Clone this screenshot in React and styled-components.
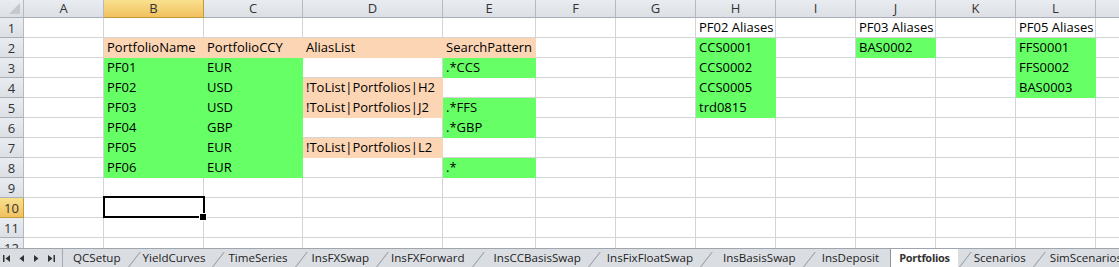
import React from "react";
import styled, { createGlobalStyle, css } from "styled-components";

const Global = createGlobalStyle`
  html, body { margin: 0; padding: 0; background: #fff; overflow: hidden; }
  * { box-sizing: border-box; }
`;

const GREEN = "#66FF66";
const PEACH = "#FCD5B4";
const GRID = "#D4D4D4";

const COLS = ["A", "B", "C", "D", "E", "F", "G", "H", "I", "J", "K", "L", "M"];
const WIDTHS = [24, 80, 100, 99, 140, 93, 80, 80, 80, 80, 80, 80, 80, 80];

const Sheet = styled.div`
  width: 1119px;
  height: 267px;
  display: flex;
  flex-direction: column;
  overflow: hidden;
  font-family: "Open Sans", "Liberation Sans", sans-serif;
`;

const Grid = styled.div`
  display: grid;
  grid-template-columns: ${WIDTHS.map((w) => w + "px").join(" ")};
  grid-template-rows: 18px repeat(12, 20px);
  height: 248px;
  width: 1119px;
  overflow: hidden;
  flex: none;
`;

const headerBase = css`
  background: linear-gradient(#E9ECF0, #DCE0E5);
  border-right: 1px solid #B5BAC1;
  border-bottom: 1px solid #A9AFB7;
  color: #333;
  font-size: 13px;
  display: flex;
  align-items: center;
  justify-content: center;
  ${(p) =>
    p.$active &&
    css`
      background: linear-gradient(#F9E08E, #F1C15F);
      border-right-color: #C59A3C;
      border-bottom-color: #C59A3C;
    `}
`;

const Corner = styled.div`
  ${headerBase};
  position: relative;
  &::after {
    content: "";
    position: absolute;
    right: 3px;
    bottom: 3px;
    width: 0;
    height: 0;
    border-left: 11px solid transparent;
    border-bottom: 11px solid #C4C9CF;
  }
`;

const ColHead = styled.div`
  ${headerBase};
  line-height: 17px;
`;

const RowHead = styled.div`
  ${headerBase};
  padding-top: 1px;
`;

const Cell = styled.div`
  position: relative;
  border-right: 1px solid ${(p) => p.$fill || GRID};
  border-bottom: 1px solid ${(p) => p.$fill || GRID};
  background: ${(p) => p.$fill || "#fff"};
  font-size: 13px;
  color: #000;
  display: flex;
  align-items: flex-end;
  padding: 0 3px 1px 3px;
  line-height: 18px;
  white-space: nowrap;
  overflow: visible;
  ${(p) =>
    p.$selected &&
    css`
      &::after {
        content: "";
        position: absolute;
        left: -1px;
        top: -2px;
        right: -2px;
        bottom: -1px;
        border: 2px solid #000;
        z-index: 2;
      }
      &::before {
        content: "";
        position: absolute;
        right: -4px;
        bottom: -4px;
        width: 6px;
        height: 6px;
        background: #000;
        border: 1px solid #fff;
        z-index: 3;
      }
    `}
`;

const TabBar = styled.div`
  height: 19px;
  background: #DADEE3;
  border-top: 1px solid #9EA5AD;
  display: flex;
  align-items: stretch;
  font-family: "Open Sans", "Liberation Sans", sans-serif;
  overflow: hidden;
  flex: none;
`;

const Nav = styled.div`
  width: 63px;
  display: flex;
  align-items: center;
  padding-left: 0px;
  border-right: 1px solid #A5ABB2;
  flex: none;
`;

const NavBtn = styled.span`
  width: 14.5px;
  display: flex;
  justify-content: center;
  align-items: center;
  svg { display: block; }
`;

const Tab = styled.div`
  position: relative;
  flex: none;
  display: flex;
  align-items: center;
  padding: 0 ${(p) => p.$pr}px 1px ${(p) => p.$pl}px;
  font-size: 11.6px;
  color: #222;
  white-space: nowrap;
  ${(p) =>
    p.$active &&
    css`
      background: #fff;
      font-weight: 700;
      font-size: 11px;
      letter-spacing: -0.3px;
      color: #333;
      margin-top: -1px;
      border-left: 1px solid #8E959D;
    `}
  ${(p) =>
    p.$slant &&
    css`
      &::before {
        content: "";
        position: absolute;
        left: 1px;
        top: 3px;
        bottom: 0;
        width: 1px;
        background: #8E959D;
        transform-origin: bottom left;
        transform: skewX(-38deg);
      }
    `}
`;

const rows = {
  1: { H: { t: "PF02 Aliases" }, J: { t: "PF03 Aliases" }, L: { t: "PF05 Aliases" } },
  2: {
    B: { t: "PortfolioName", f: PEACH },
    C: { t: "PortfolioCCY", f: PEACH },
    D: { t: "AliasList", f: PEACH },
    E: { t: "SearchPattern", f: PEACH },
    H: { t: "CCS0001", f: GREEN },
    J: { t: "BAS0002", f: GREEN },
    L: { t: "FFS0001", f: GREEN },
  },
  3: {
    B: { t: "PF01", f: GREEN },
    C: { t: "EUR", f: GREEN },
    E: { t: ".*CCS", f: GREEN },
    H: { t: "CCS0002", f: GREEN },
    L: { t: "FFS0002", f: GREEN },
  },
  4: {
    B: { t: "PF02", f: GREEN },
    C: { t: "USD", f: GREEN },
    D: { t: "!ToList|Portfolios|H2", f: PEACH },
    H: { t: "CCS0005", f: GREEN },
    L: { t: "BAS0003", f: GREEN },
  },
  5: {
    B: { t: "PF03", f: GREEN },
    C: { t: "USD", f: GREEN },
    D: { t: "!ToList|Portfolios|J2", f: PEACH },
    E: { t: ".*FFS", f: GREEN },
    H: { t: "trd0815", f: GREEN },
  },
  6: {
    B: { t: "PF04", f: GREEN },
    C: { t: "GBP", f: GREEN },
    E: { t: ".*GBP", f: GREEN },
  },
  7: {
    B: { t: "PF05", f: GREEN },
    C: { t: "EUR", f: GREEN },
    D: { t: "!ToList|Portfolios|L2", f: PEACH },
  },
  8: {
    B: { t: "PF06", f: GREEN },
    C: { t: "EUR", f: GREEN },
    E: { t: ".*", f: GREEN },
  },
};

const tabs = [
  ["QCSetup", 10, 6],
  ["YieldCurves", 16, 6],
  ["TimeSeries", 17, 6],
  ["InsFXSwap", 18, 6],
  ["InsFXForward", 16, 6],
  ["InsCCBasisSwap", 23, 6],
  ["InsFixFloatSwap", 20, 6],
  ["InsBasisSwap", 24, 6],
  ["InsDeposit", 20, 11],
  ["Portfolios", 8, 8, true],
  ["Scenarios", 16, 6],
  ["SimScenarios", 18, 6],
];

const Tri = ({ dir, bar }) => (
  <svg width="10" height="9" viewBox="0 0 10 9">
    {dir === "l" ? (
      <>
        {bar && <rect x="1" y="1" width="1.5" height="7" fill="#333" />}
        <polygon points={bar ? "8,1 3.5,4.5 8,8" : "7,1 2.5,4.5 7,8"} fill="#333" />
      </>
    ) : (
      <>
        <polygon points={bar ? "2,1 6.5,4.5 2,8" : "3,1 7.5,4.5 3,8"} fill="#333" />
        {bar && <rect x="7.5" y="1" width="1.5" height="7" fill="#333" />}
      </>
    )}
  </svg>
);

export default function App() {
  const cells = [];
  cells.push(<Corner key="corner" />);
  COLS.forEach((c) => cells.push(<ColHead key={"h" + c} $active={c === "B"}>{c}</ColHead>));
  for (let r = 1; r <= 12; r++) {
    cells.push(
      <RowHead key={"r" + r} $active={r === 10}>
        {r}
      </RowHead>
    );
    COLS.forEach((c) => {
      const d = (rows[r] && rows[r][c]) || {};
      cells.push(
        <Cell key={c + r} $fill={d.f} $selected={r === 10 && c === "B"}>
          {d.t}
        </Cell>
      );
    });
  }
  return (
    <>
      <Global />
      <Sheet>
        <Grid>{cells}</Grid>
        <TabBar>
          <Nav>
            <NavBtn><Tri dir="l" bar /></NavBtn>
            <NavBtn><Tri dir="l" /></NavBtn>
            <NavBtn><Tri dir="r" /></NavBtn>
            <NavBtn><Tri dir="r" bar /></NavBtn>
          </Nav>
          {tabs.map(([name, pl, pr, active], i) => (
            <Tab key={name} $pl={pl} $pr={pr} $active={active} $slant={i > 0 && !active}>
              {name}
            </Tab>
          ))}
        </TabBar>
      </Sheet>
    </>
  );
}
